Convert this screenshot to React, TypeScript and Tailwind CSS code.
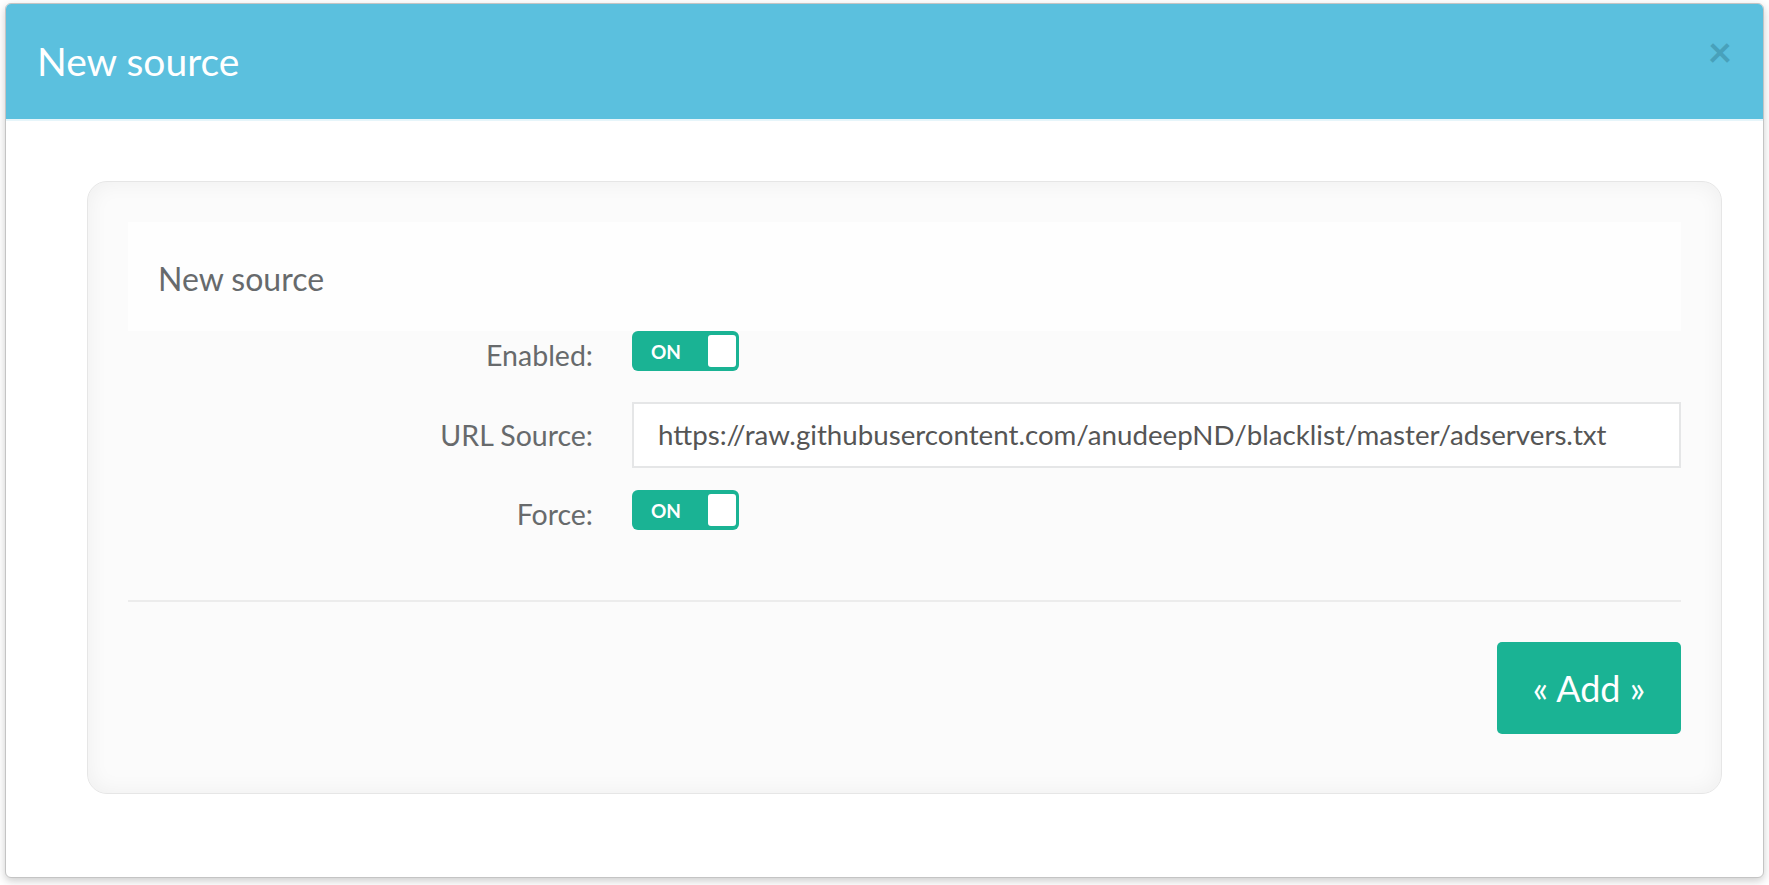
import React from "react";

function Toggle() {
  return (
    <div className="flex h-[40px] w-[107px] items-center justify-between rounded-[6px] bg-[#1ab394] pl-[19px] pr-[3px]">
      <span className="text-[19px] font-bold leading-none text-white" style={{ fontFamily: "Lato, 'Open Sans', sans-serif" }}>
        ON
      </span>
      <span className="h-[32px] w-[28px] rounded-[3px] bg-white" />
    </div>
  );
}

export default function App() {
  const font = { fontFamily: "Lato, 'Noto Sans', sans-serif" };
  return (
    <div className="h-[885px] w-[1769px] overflow-hidden bg-white pl-[5px] pt-[3px]" style={font}>
      <div className="flex h-[875px] w-[1759px] flex-col overflow-hidden rounded-[6px] border border-[#c4c4c4] bg-white shadow-[0_3px_9px_rgba(0,0,0,0.2)]">
        <div className="flex h-[117px] shrink-0 items-center justify-between border-b-2 border-[#e6f5fa] bg-[#5bc0de] pl-[31px] pr-[31px]">
          <h4 className="text-[39px] font-normal leading-none text-white">New source</h4>
          <span className="mb-[22px] text-[42px] font-bold leading-none text-[#48a1bb]">×</span>
        </div>
        <div className="pl-[81px] pr-[41px] pt-[60px]">
          <div className="flex h-[613px] flex-col rounded-[20px] border border-[#e6e6e6] bg-[#fbfbfb] p-[40px] shadow-[inset_0_0_22px_rgba(0,0,0,0.055)]">
            <div className="flex h-[109px] shrink-0 items-center bg-[#fefefe] pl-[30px] pt-[4px]">
              <span className="text-[32px] leading-none text-[#676a6c]">New source</span>
            </div>
            <div className="grid grid-cols-[465px_1fr] items-center gap-x-[39px]">
              <label className="pt-[8px] text-right text-[28.5px] leading-none text-[#676a6c]">Enabled:</label>
              <Toggle />
              <label className="mt-[31px] text-right text-[28.5px] leading-none text-[#676a6c]">URL Source:</label>
              <div className="mt-[31px] flex h-[66px] items-center border-2 border-[#e5e6e7] bg-white pl-[24px]">
                <span className="text-[27.7px] leading-none text-[#555555]">
                  https://raw.githubusercontent.com/anudeepND/blacklist/master/adservers.txt
                </span>
              </div>
              <label className="mt-[22px] pt-[8px] text-right text-[28.5px] leading-none text-[#676a6c]">Force:</label>
              <div className="mt-[22px]">
                <Toggle />
              </div>
            </div>
            <div className="mt-[70px] h-[2px] bg-[#ececec]" />
            <div className="mt-[40px] flex justify-end">
              <button className="flex h-[92px] w-[184px] items-center justify-center rounded-[5px] bg-[#1ab394] text-[36px] leading-none text-white">
                « Add »
              </button>
            </div>
          </div>
        </div>
      </div>
    </div>
  );
}
